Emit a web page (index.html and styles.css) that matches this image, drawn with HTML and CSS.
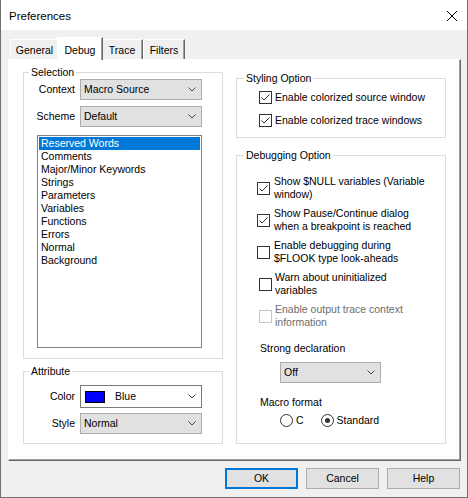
FILE: index.html
```html
<!DOCTYPE html>
<html>
<head>
<meta charset="utf-8">
<title>Preferences</title>
<link rel="stylesheet" href="styles.css">
</head>
<body>
<div class="window">
  <div class="titlebar">
    <span class="title">Preferences</span>
    <svg class="close" width="10" height="10" viewBox="0 0 10 10"><path d="M0 0L10 10M10 0L0 10" stroke="#000" stroke-width="1" fill="none"/></svg>
  </div>
  <div class="tabs">
    <div class="tab tab-general">General</div>
    <div class="tab tab-active">Debug</div>
    <div class="tab tab-trace">Trace</div>
    <div class="tab tab-filters">Filters</div>
  </div>
  <div class="panel">
    <div class="col col-left">
      <div class="group group-selection">
        <div class="group-title">Selection</div>
        <div class="field-row">
          <span class="field-label">Context</span>
          <div class="combo"><span class="combo-text">Macro Source</span><svg class="chev" width="8" height="5" viewBox="0 0 8 5"><path d="M0.5 0.5L4 4L7.5 0.5" stroke="#444" fill="none"/></svg></div>
        </div>
        <div class="field-row row-scheme">
          <span class="field-label">Scheme</span>
          <div class="combo"><span class="combo-text">Default</span><svg class="chev" width="8" height="5" viewBox="0 0 8 5"><path d="M0.5 0.5L4 4L7.5 0.5" stroke="#444" fill="none"/></svg></div>
        </div>
        <div class="listbox">
          <div class="list-item sel">Reserved Words</div>
          <div class="list-item">Comments</div>
          <div class="list-item">Major/Minor Keywords</div>
          <div class="list-item">Strings</div>
          <div class="list-item">Parameters</div>
          <div class="list-item">Variables</div>
          <div class="list-item">Functions</div>
          <div class="list-item">Errors</div>
          <div class="list-item">Normal</div>
          <div class="list-item">Background</div>
        </div>
      </div>
      <div class="group group-attribute">
        <div class="group-title">Attribute</div>
        <div class="field-row row-color">
          <span class="field-label">Color</span>
          <div class="combo combo-white"><span class="swatch"></span><span class="combo-text">Blue</span><svg class="chev" width="8" height="5" viewBox="0 0 8 5"><path d="M0.5 0.5L4 4L7.5 0.5" stroke="#444" fill="none"/></svg></div>
        </div>
        <div class="field-row row-style">
          <span class="field-label">Style</span>
          <div class="combo"><span class="combo-text">Normal</span><svg class="chev" width="8" height="5" viewBox="0 0 8 5"><path d="M0.5 0.5L4 4L7.5 0.5" stroke="#444" fill="none"/></svg></div>
        </div>
      </div>
    </div>
    <div class="col col-right">
      <div class="group group-styling">
        <div class="group-title">Styling Option</div>
        <div class="check-row">
          <span class="check"><svg width="11" height="11" viewBox="0 0 11 11"><path d="M1.5 5.5L4 8L9.5 2.5" stroke="#333" fill="none"/></svg></span>
          <span class="check-label">Enable colorized source window</span>
        </div>
        <div class="check-row">
          <span class="check"><svg width="11" height="11" viewBox="0 0 11 11"><path d="M1.5 5.5L4 8L9.5 2.5" stroke="#333" fill="none"/></svg></span>
          <span class="check-label">Enable colorized trace windows</span>
        </div>
      </div>
      <div class="group group-debug">
        <div class="group-title">Debugging Option</div>
        <div class="check-row">
          <span class="check"><svg width="11" height="11" viewBox="0 0 11 11"><path d="M1.5 5.5L4 8L9.5 2.5" stroke="#333" fill="none"/></svg></span>
          <span class="check-label">Show $NULL variables (Variable<br>window)</span>
        </div>
        <div class="check-row">
          <span class="check"><svg width="11" height="11" viewBox="0 0 11 11"><path d="M1.5 5.5L4 8L9.5 2.5" stroke="#333" fill="none"/></svg></span>
          <span class="check-label">Show Pause/Continue dialog<br>when a breakpoint is reached</span>
        </div>
        <div class="check-row">
          <span class="check"></span>
          <span class="check-label">Enable debugging during<br>$FLOOK type look-aheads</span>
        </div>
        <div class="check-row check-row-inset">
          <span class="check"></span>
          <span class="check-label">Warn about uninitialized<br>variables</span>
        </div>
        <div class="check-row check-row-inset disabled">
          <span class="check"></span>
          <span class="check-label">Enable output trace context<br>information</span>
        </div>
        <div class="sub-label">Strong declaration</div>
        <div class="combo combo-off"><span class="combo-text">Off</span><svg class="chev" width="8" height="5" viewBox="0 0 8 5"><path d="M0.5 0.5L4 4L7.5 0.5" stroke="#444" fill="none"/></svg></div>
        <div class="sub-label">Macro format</div>
        <div class="radio-row">
          <span class="radio-opt"><span class="radio"></span>C</span>
          <span class="radio-opt"><span class="radio on"></span>Standard</span>
        </div>
      </div>
    </div>
  </div>
  <div class="buttons">
    <div class="btn btn-default">OK</div>
    <div class="btn">Cancel</div>
    <div class="btn">Help</div>
  </div>
</div>
</body>
</html>
```
FILE: styles.css
```css
* { box-sizing: border-box; }
html, body { margin: 0; padding: 0; }
body {
  font-family: "Liberation Sans", Arial, sans-serif;
  font-size: 10.5px;
  line-height: 13px;
  color: #000;
  background: #f0f0f0;
}
.window {
  width: 468px;
  height: 498px;
  background: #f0f0f0;
  border: 1px solid #707070;
  border-top: none;
  display: flex;
  flex-direction: column;
}
.titlebar {
  height: 30px;
  flex: none;
  background: #fff;
  display: flex;
  align-items: center;
  padding: 2px 10px 0 8px;
}
.title { font-size: 11.5px; line-height: 14px; }
.close { margin-left: auto; display: block; }

.tabs {
  display: flex;
  align-items: flex-end;
  height: 22px;
  flex: none;
  margin-top: 7px;
  padding-left: 9px;
}
.tab {
  height: 20px;
  padding-top: 4px;
  text-align: center;
  background: #f0f0f0;
  border-top: 1px solid #fff;
  border-left: 1px solid #fff;
  border-right: 1px solid #696969;
  box-shadow: inset -1px 0 #a0a0a0;
  white-space: nowrap;
}
.tab-general { width: 49px; }
.tab-trace, .tab-filters { width: 42px; }
.tab-active {
  width: 46px;
  height: 23px;
  margin: 0 -2px -1px;
  padding-top: 6px;
  background: #fff;
  position: relative;
  z-index: 1;
}

.panel {
  flex: none;
  width: 453px;
  height: 402px;
  margin-left: 7px;
  background: #fff;
  border-top: 1px solid #fff;
  border-left: 1px solid #fff;
  border-right: 1px solid #696969;
  border-bottom: 1px solid #696969;
  box-shadow: inset -1px -1px #a0a0a0;
  display: flex;
  align-items: flex-start;
}
.col-left { margin-left: 14px; width: 200px; padding-top: 12px; }
.col-right { margin-left: 13px; width: 210px; padding-top: 18px; }

.group { border: 1px solid #dcdcdc; }
.group-title {
  display: table;
  margin: -7px 0 0 5px;
  padding: 0 2px;
  background: #fff;
  white-space: nowrap;
}
.col-right .group-title { margin-left: 7px; }

.group-selection { padding-bottom: 10px; }
.field-row { display: flex; align-items: center; height: 21px; }
.field-label { width: 51px; text-align: right; margin-right: 5px; flex: none; }
.row-scheme { margin-top: 6px; }
.combo {
  width: 122px;
  height: 21px;
  flex: none;
  display: flex;
  align-items: center;
  padding: 0 5px 0 3px;
  background: #e1e1e1;
  border: 1px solid #adadad;
}
.combo-text { flex: 1; white-space: nowrap; }
.chev { display: block; flex: none; }
.listbox {
  margin: 8px 0 0 13px;
  width: 165px;
  height: 213px;
  border: 1px solid #828282;
  padding: 1px;
  background: #fff;
}
.list-item { height: 13px; padding-left: 2px; white-space: nowrap; }
.list-item.sel { background: #0078d7; color: #fff; }

.group-attribute { margin-top: 12px; padding-bottom: 9px; }
.row-color { margin-top: 7px; height: 23px; }
.combo-white { height: 23px; background: #fff; border-color: #7a7a7a; padding-left: 4px; }
.swatch {
  width: 20px;
  height: 12px;
  flex: none;
  background: #0000ff;
  border: 1px solid #000;
  margin-right: 10px;
}
.row-style { margin-top: 5px; }

.group-styling { padding-bottom: 8px; }
.check-row { display: flex; align-items: center; }
.group-styling .check-row { height: 17px; padding-left: 22px; margin-top: 6px; }
.group-styling .group-title + .check-row { margin-top: 4px; }
.check {
  width: 13px;
  height: 13px;
  flex: none;
  border: 1px solid #333;
  background: #fff;
  margin-right: 3px;
}
.check svg { display: block; }
.check-label { white-space: nowrap; }

.group-debug { margin-top: 17px; padding-bottom: 16px; }
.group-debug .check-row { height: 26px; padding-left: 20px; margin-top: 6px; }
.group-debug .check-row .check { margin-right: 4px; }
.group-debug .group-title + .check-row { margin-top: 13px; }
.group-debug .check-row-inset { padding-left: 22px; }
.group-debug .check-row-inset .check { margin-right: 3px; }
.disabled .check { border-color: #c4c4c4; }
.disabled .check-label { color: #6d6d6d; }

.sub-label { margin: 13px 0 0 23px; }
.combo-off { width: 101px; margin: 7px 0 0 43px; }
.radio-row { display: flex; align-items: center; height: 13px; margin: 5px 0 0 43px; }
.radio-opt { display: flex; align-items: center; }
.radio-opt + .radio-opt { margin-left: 17px; }
.radio {
  width: 13px;
  height: 13px;
  border-radius: 50%;
  border: 1px solid #333;
  background: #fff;
  display: flex;
  align-items: center;
  justify-content: center;
  margin-right: 3px;
}
.radio.on::after {
  content: "";
  width: 5px;
  height: 5px;
  border-radius: 50%;
  background: #333;
}

.buttons {
  display: flex;
  justify-content: flex-end;
  gap: 8px;
  margin-top: 7px;
  padding-right: 7px;
}
.btn {
  width: 73px;
  height: 21px;
  display: flex;
  align-items: center;
  justify-content: center;
  background: #e1e1e1;
  border: 1px solid #adadad;
}
.btn-default { border: 2px solid #0078d7; }
```
